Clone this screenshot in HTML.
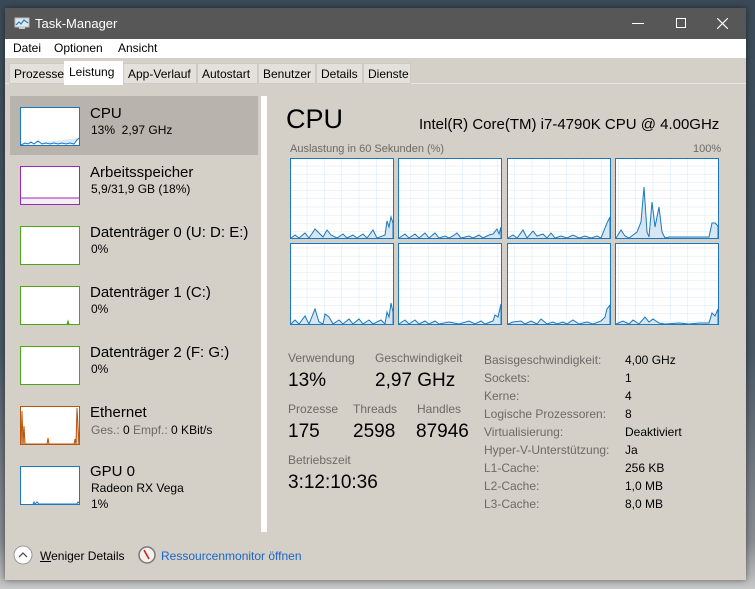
<!DOCTYPE html>
<html><head><meta charset="utf-8"><style>
*{margin:0;padding:0;box-sizing:border-box}
body{width:755px;height:589px;overflow:hidden;background:linear-gradient(180deg,#3b4a58 0%,#4a5866 60%,#8a8e92 92%,#c8c8c8 100%);font-family:"Liberation Sans",sans-serif;position:relative;font-size:12px;color:#000}
.a{position:absolute;white-space:nowrap}
#win{position:absolute;left:5px;top:8px;width:741px;height:572px;background:#d4d0c8;box-shadow:0 0 6px rgba(0,0,0,.5)}
#title{position:absolute;left:0;top:0;width:741px;height:31px;background:#575757;color:#fff;font-size:13px}
#menu{position:absolute;left:0;top:31px;width:741px;height:19px;background:#fff;font-size:12px}
.tab{position:absolute;top:55px;height:21px;background:#e4e1dc;border:1px solid #cfcbc4;font-size:12px;padding:3px 0 0 4px;overflow:hidden}
.lbl{color:#6d6a66}
</style></head><body>
<div id="win">
<div id="title">
<svg class="a" style="left:9px;top:9px" width="16" height="13"><rect x="1" y="1" width="14" height="9" fill="#dde8f0" stroke="#bbb"/><polyline points="2,8 5,5 7,7 10,3 14,6" fill="none" stroke="#2a7fc0" stroke-width="1.2"/><rect x="5" y="10" width="6" height="2" fill="#ccc"/></svg>
<div class="a" style="left:30px;top:8px">Task-Manager</div>
<div class="a" style="left:627px;top:15px;width:12px;height:1px;background:#fff"></div>
<div class="a" style="left:671px;top:10px;width:10px;height:10px;border:1px solid #fff"></div>
<svg class="a" style="left:712px;top:10px" width="11" height="11"><path d="M0,0L11,11M11,0L0,11" stroke="#fff" stroke-width="1.2"/></svg>
</div>
<div id="menu">
<span class="a" style="left:8px;top:2px">Datei</span><span class="a" style="left:49px;top:2px">Optionen</span><span class="a" style="left:113px;top:2px">Ansicht</span>
</div>
<div class="a" style="left:0;top:50px;width:741px;height:26px;background:#d4d0c8;border-bottom:1px solid #e8e6e2"></div>
<div class="tab" style="left:4px;width:58px">Prozesse</div>
<div class="tab" style="left:59px;top:53px;width:59px;height:24px;background:#fff;border-color:#fff;border-bottom:none;padding-top:3px">Leistung</div>
<div class="tab" style="left:118px;width:74px">App-Verlauf</div>
<div class="tab" style="left:192px;width:61px">Autostart</div>
<div class="tab" style="left:253px;width:58px">Benutzer</div>
<div class="tab" style="left:311px;width:47px">Details</div>
<div class="tab" style="left:358px;width:48px">Dienste</div>
</div>

<div class="a" style="left:10px;top:96px;width:248px;height:59px;background:#b8b4ad"></div>
<div class="a" style="left:261px;top:96px;width:6px;height:436px;background:#fff"></div>

<svg class="a" style="left:20px;top:107px" width="61" height="40"><rect x="0.5" y="0.5" width="59" height="38" fill="#fff" stroke="#1b78c0"/><polyline points="1,38 5,36 8,37 11,35 14,37 18,34 22,37 26,36 30,37 34,36 38,37 42,36 46,37 50,36 54,37 57,33 59,31" fill="#dceaf6" stroke="#1b78c0" stroke-width="1"/></svg>
<div class="a" style="left:90px;top:105px;font-size:15px">CPU</div>
<div class="a" style="left:91px;top:123px">13%&nbsp; 2,97 GHz</div>

<svg class="a" style="left:20px;top:166px" width="61" height="40"><rect x="0.5" y="0.5" width="59" height="38" fill="#fff" stroke="#9a28b8"/><rect x="1" y="32" width="58" height="6" fill="#f3edf5"/><line x1="1" y1="32" x2="59" y2="32" stroke="#9a28b8"/></svg>
<div class="a" style="left:90px;top:164px;font-size:15px">Arbeitsspeicher</div>
<div class="a" style="left:91px;top:182px">5,9/31,9 GB (18%)</div>

<svg class="a" style="left:20px;top:226px" width="61" height="40"><rect x="0.5" y="0.5" width="59" height="38" fill="#fff" stroke="#4ea617"/></svg>
<div class="a" style="left:90px;top:224px;font-size:15px">Datenträger 0 (U: D: E:)</div>
<div class="a" style="left:91px;top:242px">0%</div>

<svg class="a" style="left:20px;top:286px" width="61" height="40"><rect x="0.5" y="0.5" width="59" height="38" fill="#fff" stroke="#4ea617"/><polyline points="47,38 48,35 49,38" fill="#4ea617" stroke="#4ea617"/></svg>
<div class="a" style="left:90px;top:284px;font-size:15px">Datenträger 1 (C:)</div>
<div class="a" style="left:91px;top:302px">0%</div>

<svg class="a" style="left:20px;top:346px" width="61" height="40"><rect x="0.5" y="0.5" width="59" height="38" fill="#fff" stroke="#4ea617"/></svg>
<div class="a" style="left:90px;top:344px;font-size:15px">Datenträger 2 (F: G:)</div>
<div class="a" style="left:91px;top:362px">0%</div>

<svg class="a" style="left:20px;top:406px" width="61" height="40"><rect x="0.5" y="0.5" width="59" height="38" fill="#fff" stroke="#b8550e"/><polyline points="1,38 2,5 3,38 4,20 5,38 27,38 28,32 29,38 54,38 55,33 56,38 57,2 58,20 59,38" fill="#e9c7a8" stroke="#b8550e"/></svg>
<div class="a" style="left:90px;top:404px;font-size:15px">Ethernet</div>
<div class="a" style="left:91px;top:423px"><span class="lbl">Ges.:</span> 0 <span class="lbl">Empf.:</span> 0 KBit/s</div>

<svg class="a" style="left:20px;top:466px" width="61" height="40"><rect x="0.5" y="0.5" width="59" height="38" fill="#fff" stroke="#1b78c0"/><polyline points="13,38 14,36 15,38 17,36 19,38 57,38 58,36 59,37" fill="none" stroke="#1b78c0"/></svg>
<div class="a" style="left:90px;top:463px;font-size:15px">GPU 0</div>
<div class="a" style="left:91px;top:481px">Radeon RX Vega</div>
<div class="a" style="left:91px;top:497px">1%</div>

<div class="a" style="left:286px;top:104px;font-size:27px">CPU</div>
<div class="a" style="left:419px;top:116px;font-size:15px">Intel(R) Core(TM) i7-4790K CPU @ 4.00GHz</div>
<div class="a lbl" style="left:290px;top:143px;font-size:11px">Auslastung in 60 Sekunden (%)</div>
<div class="a lbl" style="left:693px;top:143px;font-size:11px">100%</div>

<svg class="a" style="left:289px;top:157px" width="432" height="170">
<defs><pattern id="gr" width="17.3" height="8.2" patternUnits="userSpaceOnUse" x="1" y="1"><path d="M17.3,0V8.2M0,8.2H17.3" fill="none" stroke="#d7e7f4" stroke-width="1"/></pattern></defs>
<g fill="#fff" stroke="#1b78c0" stroke-width="1">
<rect x="1.5" y="1.5" width="103" height="80"/><rect x="109.5" y="1.5" width="103" height="80"/><rect x="218.5" y="1.5" width="103" height="80"/><rect x="326.5" y="1.5" width="103" height="80"/>
<rect x="1.5" y="86.5" width="103" height="81"/><rect x="109.5" y="86.5" width="103" height="81"/><rect x="218.5" y="86.5" width="103" height="81"/><rect x="326.5" y="86.5" width="103" height="81"/>
</g>
<g fill="url(#gr)">
<rect x="2" y="2" width="102" height="79"/><rect x="110" y="2" width="102" height="79"/><rect x="219" y="2" width="102" height="79"/><rect x="327" y="2" width="102" height="79"/>
<rect x="2" y="87" width="102" height="80"/><rect x="110" y="87" width="102" height="80"/><rect x="219" y="87" width="102" height="80"/><rect x="327" y="87" width="102" height="80"/>
</g>
<g fill="#d6e6f3" stroke="#1b78c0" stroke-width="1">
<polyline points="2,81 6,78 10,81 16,76 20,81 26,72 30,76 34,80 38,73 42,78 48,81 54,77 58,81 64,78 68,81 74,77 78,81 84,73 88,81 96,78 98,64 100,70 102,60 104,66 104,81"/>
<polyline points="110,81 116,77 120,81 126,77 130,81 136,76 140,81 146,76 150,81 156,79 160,81 164,79 168,76 172,81 180,79 184,81 190,78 194,81 200,78 204,77 208,72 210,77 212,70 212,81"/>
<polyline points="219,81 224,78 228,81 234,73 238,81 244,74 248,79 254,77 258,81 262,76 266,81 272,79 278,81 284,78 290,81 296,79 302,81 308,79 312,81 318,66 321,60 321,81"/>
<polyline points="327,81 332,73 336,79 340,81 344,78 348,75 352,65 355,30 358,75 360,80 363,45 366,70 370,50 373,75 376,81 380,80 420,80 423,66 426,66 429,69 429,81"/>
<polyline points="2,167 6,163 10,167 16,159 20,167 26,152 30,165 34,167 36,157 40,160 44,167 50,163 54,167 60,162 64,167 70,162 74,167 80,163 84,167 92,163 96,167 98,155 100,160 102,146 104,155 104,167"/>
<polyline points="110,167 116,163 120,167 126,163 130,167 136,164 140,167 146,164 150,167 160,165 170,167 180,164 186,167 192,164 196,167 204,164 206,158 209,160 212,147 212,167"/>
<polyline points="219,167 224,165 232,164 236,167 242,164 248,167 252,162 258,167 264,165 268,167 274,165 278,167 284,163 290,167 298,165 304,167 312,164 316,160 318,152 321,148 321,167"/>
<polyline points="327,167 334,164 340,167 344,163 350,167 356,160 360,165 364,162 370,166 376,167 390,166 400,167 410,166 420,166 423,156 426,159 429,152 429,167"/>
</g>
</svg>

<div class="a lbl" style="left:288px;top:351px">Verwendung</div>
<div class="a lbl" style="left:375px;top:351px">Geschwindigkeit</div>
<div class="a" style="left:288px;top:370px;font-size:19px">13%</div>
<div class="a" style="left:375px;top:370px;font-size:19px">2,97 GHz</div>
<div class="a lbl" style="left:288px;top:402px">Prozesse</div>
<div class="a lbl" style="left:353px;top:402px">Threads</div>
<div class="a lbl" style="left:417px;top:402px">Handles</div>
<div class="a" style="left:288px;top:421px;font-size:19px">175</div>
<div class="a" style="left:353px;top:421px;font-size:19px">2598</div>
<div class="a" style="left:416px;top:421px;font-size:19px">87946</div>
<div class="a lbl" style="left:288px;top:453px">Betriebszeit</div>
<div class="a" style="left:288px;top:472px;font-size:19px">3:12:10:36</div>

<div class="a lbl" style="left:484px;top:351px;line-height:18px">Basisgeschwindigkeit:<br>Sockets:<br>Kerne:<br>Logische Prozessoren:<br>Virtualisierung:<br>Hyper-V-Unterstützung:<br>L1-Cache:<br>L2-Cache:<br>L3-Cache:</div>
<div class="a" style="left:625px;top:351px;line-height:18px">4,00 GHz<br>1<br>4<br>8<br>Deaktiviert<br>Ja<br>256 KB<br>1,0 MB<br>8,0 MB</div>

<svg class="a" style="left:13px;top:545px" width="20" height="20"><circle cx="10" cy="10" r="9" fill="#fff" stroke="#999"/><path d="M6,12L10,8L14,12" fill="none" stroke="#555" stroke-width="1.3"/></svg>
<div class="a" style="left:40px;top:549px"><u>W</u>eniger Details</div>
<svg class="a" style="left:138px;top:546px" width="18" height="18"><circle cx="9" cy="9" r="8" fill="#f4f0ea" stroke="#777" stroke-width="1.5"/><path d="M6,4L11,13" stroke="#c22" stroke-width="1.6"/></svg>
<div class="a" style="left:161px;top:549px;color:#1a66c4">Ressourcenmonitor öffnen</div>
</body></html>
